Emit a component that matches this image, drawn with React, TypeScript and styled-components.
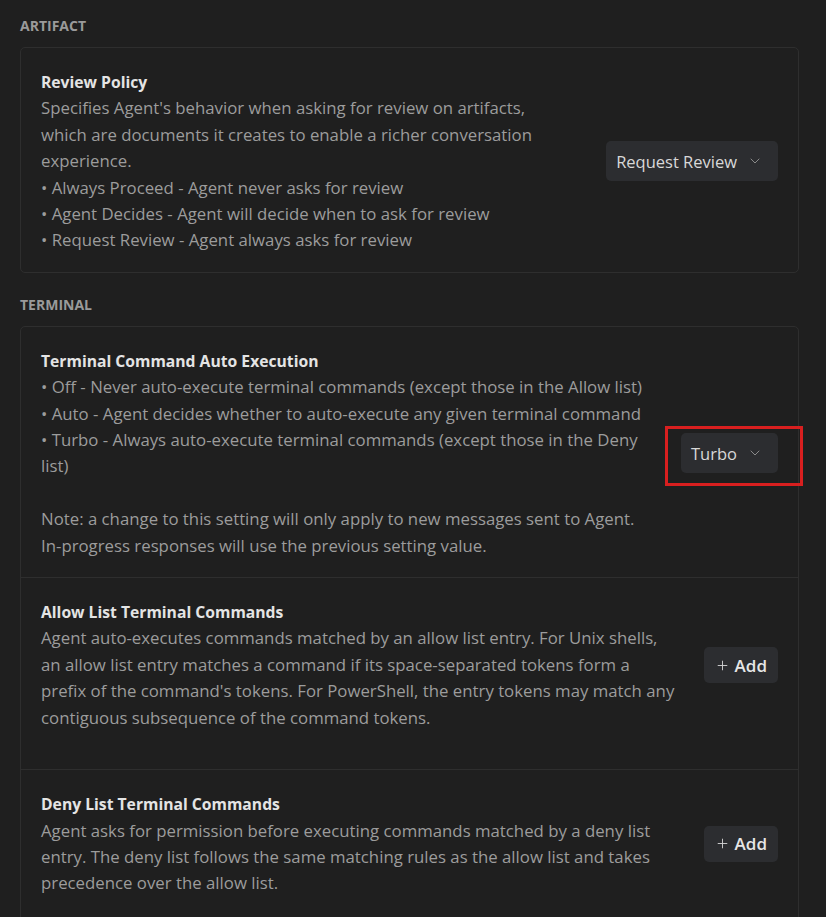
import React from "react";
import styled, { createGlobalStyle } from "styled-components";
import { ChevronDown, Plus } from "lucide-react";

const Global = createGlobalStyle`
  html, body { margin: 0; padding: 0; background: #1f1f1f; }
  body { font-family: "Open Sans", "Noto Sans", sans-serif; -webkit-font-smoothing: antialiased; }
`;

const Page = styled.div`
  padding: 16px 27px 0 20px;
  display: flex;
  flex-direction: column;
`;

const SectionTitle = styled.div<{ $first?: boolean }>`
  font-size: 14px;
  font-weight: 700;
  line-height: 20px;
  color: #9a9a9a;
  margin-top: ${(p) => (p.$first ? 0 : 22)}px;
  margin-bottom: 11px;
`;

const Card = styled.div`
  border: 1px solid #2e2e2e;
  border-radius: 5px;
  display: flex;
  flex-direction: column;
`;

const Row = styled.div<{ $extraBottom?: number }>`
  display: flex;
  align-items: center;
  gap: 24px;
  padding: 21px 20px ${(p) => 18 + (p.$extraBottom ?? 0)}px 20px;
  & + & { border-top: 1px solid #2e2e2e; }
`;

const TextCol = styled.div<{ $max: number }>`
  flex: 1;
  min-width: 0;
  max-width: ${(p) => p.$max}px;
  margin-right: auto;
`;

const Title = styled.div`
  font-size: 15.7px;
  font-weight: 700;
  color: #e4e4e4;
  line-height: 26.4px;
`;

const Desc = styled.div`
  font-size: 16.8px;
  color: #9c9c9c;
  line-height: 26.4px;
`;

const Note = styled(Desc)`
  margin-top: 26.4px;
`;

const Dropdown = styled.button`
  display: flex;
  align-items: center;
  gap: 10px;
  height: 40px;
  padding: 0 15px 0 10px;
  background: #2c2d30;
  border: none;
  border-radius: 5px;
  color: #d8d8d8;
  font-family: inherit;
  font-size: 16.5px;
  flex-shrink: 0;
  svg { color: #8a8a8a; }
`;

const AddButton = styled.button`
  display: flex;
  align-items: center;
  gap: 5px;
  height: 36px;
  padding: 0 11px 0 11px;
  background: #2c2d30;
  border: none;
  border-radius: 5px;
  color: #e6e6e6;
  font-family: inherit;
  font-size: 17px;
  font-weight: 600;
  flex-shrink: 0;
  svg { color: #d0d0d0; }
`;

const Highlight = styled.div`
  position: relative;
  flex-shrink: 0;
`;

const RedBox = styled.div`
  position: absolute;
  top: -7px;
  left: -16px;
  right: -25px;
  bottom: -13px;
  border: 3px solid #d81f1f;
  pointer-events: none;
`;

export default function App() {
  return (
    <>
      <Global />
      <Page>
        <SectionTitle $first>ARTIFACT</SectionTitle>
        <Card>
          <Row>
            <TextCol $max={500}>
              <Title>Review Policy</Title>
              <Desc>
                Specifies Agent's behavior when asking for review on artifacts,
                which are documents it creates to enable a richer conversation
                experience.
              </Desc>
              <Desc>• Always Proceed - Agent never asks for review</Desc>
              <Desc>• Agent Decides - Agent will decide when to ask for review</Desc>
              <Desc>• Request Review - Agent always asks for review</Desc>
            </TextCol>
            <Dropdown>
              Request Review <ChevronDown size={16} strokeWidth={1.5} />
            </Dropdown>
          </Row>
        </Card>

        <SectionTitle>TERMINAL</SectionTitle>
        <Card>
          <Row>
            <TextCol $max={612}>
              <Title>Terminal Command Auto Execution</Title>
              <Desc>• Off - Never auto-execute terminal commands (except those in the Allow list)</Desc>
              <Desc>• Auto - Agent decides whether to auto-execute any given terminal command</Desc>
              <Desc>• Turbo - Always auto-execute terminal commands (except those in the Deny list)</Desc>
              <Note>
                Note: a change to this setting will only apply to new messages sent to Agent.
                In-progress responses will use the previous setting value.
              </Note>
            </TextCol>
            <Highlight>
              <Dropdown>
                Turbo <ChevronDown size={16} strokeWidth={1.5} />
              </Dropdown>
              <RedBox />
            </Highlight>
          </Row>
          <Row $extraBottom={20}>
            <TextCol $max={634}>
              <Title>Allow List Terminal Commands</Title>
              <Desc>
                Agent auto-executes commands matched by an allow list entry. For Unix shells,
                an allow list entry matches a command if its space-separated tokens form a
                prefix of the command's tokens. For PowerShell, the entry tokens may match any
                contiguous subsequence of the command tokens.
              </Desc>
            </TextCol>
            <AddButton>
              <Plus size={15} strokeWidth={1.5} /> Add
            </AddButton>
          </Row>
          <Row $extraBottom={20}>
            <TextCol $max={620}>
              <Title>Deny List Terminal Commands</Title>
              <Desc>
                Agent asks for permission before executing commands matched by a deny list
                entry. The deny list follows the same matching rules as the allow list and takes
                precedence over the allow list.
              </Desc>
            </TextCol>
            <AddButton>
              <Plus size={15} strokeWidth={1.5} /> Add
            </AddButton>
          </Row>
        </Card>
      </Page>
    </>
  );
}
